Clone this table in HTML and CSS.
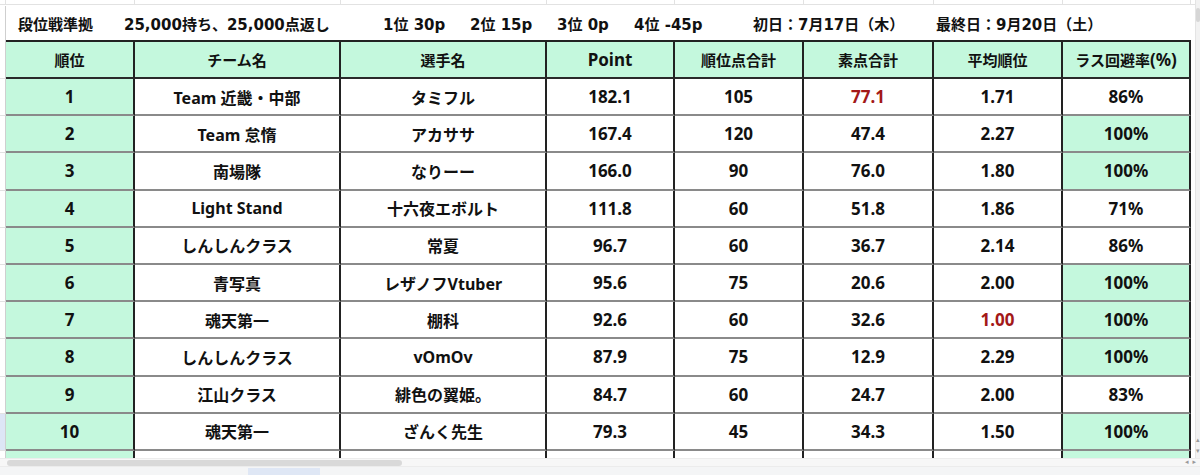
FILE: index.html
```html
<!DOCTYPE html>
<html lang="ja">
<head>
<meta charset="utf-8">
<title>段位戦準拠</title>
<link rel="stylesheet" href="styles.css">
</head>
<body>
<div class="sheet">
  <div class="main">
    <div class="grid-area">
      <div class="strip">
        <div class="sc"></div><div class="sc"></div><div class="sc"></div><div class="sc"></div><div class="sc"></div><div class="sc"></div><div class="sc"></div><div class="sc"></div><div class="sc"></div><div class="sc end"></div>
      </div>
      <div class="titlerow">
        <div class="rh plain"></div>
        <span class="t t1">段位戦準拠</span>
        <span class="t t2">25,000持ち、25,000点返し</span>
        <span class="t t3">1位 30p</span>
        <span class="t t4">2位 15p</span>
        <span class="t t5">3位 0p</span>
        <span class="t t6">4位 -45p</span>
        <span class="t t7">初日：7月17日（木）</span>
        <span class="t t8">最終日：9月20日（土）</span>
      </div>

      <div class="row head">
        <div class="rh"></div>
        <div class="c mint">順位</div>
        <div class="c mint">チーム名</div>
        <div class="c mint">選手名</div>
        <div class="c mint">Point</div>
        <div class="c mint">順位点合計</div>
        <div class="c mint">素点合計</div>
        <div class="c mint">平均順位</div>
        <div class="c mint">ラス回避率<span class="pct">(%)</span></div>
        <div class="pad"></div>
      </div>

      <div class="row">
        <div class="rh"></div>
        <div class="c mint num">1</div><div class="c">Team 近畿・中部</div><div class="c">タミフル</div>
        <div class="c num">182.1</div><div class="c num">105</div><div class="c num red">77.1</div><div class="c num">1.71</div><div class="c num">86%</div>
        <div class="pad"></div>
      </div>
      <div class="row">
        <div class="rh"></div>
        <div class="c mint num">2</div><div class="c">Team 怠惰</div><div class="c">アカササ</div>
        <div class="c num">167.4</div><div class="c num">120</div><div class="c num">47.4</div><div class="c num">2.27</div><div class="c num mint">100%</div>
        <div class="pad"></div>
      </div>
      <div class="row">
        <div class="rh"></div>
        <div class="c mint num">3</div><div class="c">南場隊</div><div class="c">なりーー</div>
        <div class="c num">166.0</div><div class="c num">90</div><div class="c num">76.0</div><div class="c num">1.80</div><div class="c num mint">100%</div>
        <div class="pad"></div>
      </div>
      <div class="row">
        <div class="rh"></div>
        <div class="c mint num">4</div><div class="c">Light Stand</div><div class="c">十六夜エボルト</div>
        <div class="c num">111.8</div><div class="c num">60</div><div class="c num">51.8</div><div class="c num">1.86</div><div class="c num">71%</div>
        <div class="pad"></div>
      </div>
      <div class="row">
        <div class="rh"></div>
        <div class="c mint num">5</div><div class="c">しんしんクラス</div><div class="c">常夏</div>
        <div class="c num">96.7</div><div class="c num">60</div><div class="c num">36.7</div><div class="c num">2.14</div><div class="c num">86%</div>
        <div class="pad"></div>
      </div>
      <div class="row">
        <div class="rh"></div>
        <div class="c mint num">6</div><div class="c">青写真</div><div class="c">レザノフVtuber</div>
        <div class="c num">95.6</div><div class="c num">75</div><div class="c num">20.6</div><div class="c num">2.00</div><div class="c num mint">100%</div>
        <div class="pad"></div>
      </div>
      <div class="row">
        <div class="rh"></div>
        <div class="c mint num">7</div><div class="c">魂天第一</div><div class="c">棚科</div>
        <div class="c num">92.6</div><div class="c num">60</div><div class="c num">32.6</div><div class="c num red">1.00</div><div class="c num mint">100%</div>
        <div class="pad"></div>
      </div>
      <div class="row">
        <div class="rh"></div>
        <div class="c mint num">8</div><div class="c">しんしんクラス</div><div class="c">vOmOv</div>
        <div class="c num">87.9</div><div class="c num">75</div><div class="c num">12.9</div><div class="c num">2.29</div><div class="c num mint">100%</div>
        <div class="pad"></div>
      </div>
      <div class="row">
        <div class="rh"></div>
        <div class="c mint num">9</div><div class="c">江山クラス</div><div class="c">緋色の翼姫。</div>
        <div class="c num">84.7</div><div class="c num">60</div><div class="c num">24.7</div><div class="c num">2.00</div><div class="c num">83%</div>
        <div class="pad"></div>
      </div>
      <div class="row">
        <div class="rh sel"></div>
        <div class="c mint num">10</div><div class="c">魂天第一</div><div class="c">ざんく先生</div>
        <div class="c num">79.3</div><div class="c num">45</div><div class="c num">34.3</div><div class="c num">1.50</div><div class="c num mint">100%</div>
        <div class="pad"></div>
      </div>
      <div class="row partial">
        <div class="rh"></div>
        <div class="c mint"></div><div class="c"></div><div class="c"></div>
        <div class="c"></div><div class="c"></div><div class="c"></div><div class="c"></div><div class="c mint"></div>
        <div class="pad"></div>
      </div>
    </div>
    <div class="vscroll">
      <div class="vthumb"></div>
      <div class="varrows"><span>▴</span><span>▾</span></div>
    </div>
  </div>
  <div class="hscroll">
    <div class="hthumb"></div>
    <div class="harrows"><span>◂</span><span>▸</span></div>
  </div>
  <div class="tabs"><div class="tab"></div></div>
</div>
</body>
</html>
```

FILE: styles.css
```css
* { box-sizing: border-box; }

body {
  margin: 0;
  width: 1200px;
  height: 475px;
  overflow: hidden;
  background: #fff;
  color: #111;
  font-family: "Noto Sans", "Noto Sans CJK JP", sans-serif;
  font-weight: 700;
}

.sheet { display: flex; flex-direction: column; width: 1200px; height: 475px; }

.main { display: flex; height: 458px; }

.grid-area { width: 1195px; height: 458px; overflow: hidden; }

/* previous row remnant */
.strip {
  display: grid;
  grid-template-columns: 6px 129px 206px 206px 128px 129px 130px 129px 128px 4px;
  height: 5px;
}
.sc { border-right: 1px solid #e2e2e2; border-bottom: 1px solid #e2e2e2; }
.sc.end { border-right: none; }

/* title row */
.titlerow {
  display: flex;
  align-items: center;
  height: 35px;
  font-size: 15px;
  font-family: "DejaVu Sans", "Noto Sans CJK JP", sans-serif;
  white-space: nowrap;
  padding-top: 1px;
}
.titlerow .rh { height: 35px; width: 6px; margin-right: 12px; }
.t { display: block; }
.t1 { width: 106px; }
.t2 { width: 259px; }
.t3 { width: 87px; }
.t4 { width: 87px; }
.t5 { width: 77px; }
.t6 { width: 119px; }
.t7 { width: 183px; }
.t8 { width: 200px; }

/* table rows */
.row {
  display: grid;
  grid-template-columns: 6px 129px 206px 206px 128px 129px 130px 129px 128px 4px;
  height: 37.2px;
  font-size: 16px;
}
.rh {
  border-right: 1px solid #cfcfcf;
  border-bottom: 1px solid #e2e2e2;
  background: #fff;
}
.rh.sel { background: #dde6f6; }
.rh.plain { border-bottom: none; }

.c {
  display: flex;
  align-items: center;
  justify-content: center;
  border-right: 2px solid #222;
  border-bottom: 2px solid #8a8a8a;
  white-space: nowrap;
  background: #fff;
}
.pad { background: #fff; }

.head { height: 39px; font-size: 15px; }
.head .c { border-top: 2px solid #222; border-bottom: 2px solid #2a2a2a; }
.head .c:nth-child(5) { font-size: 17px; }
.pct { font-size: 17px; }

.mint { background: #c4f8dd; }
.num { font-size: 17px; }
.red { color: #a31818; }

.partial { height: 8px; }
.partial .c { border-bottom: none; }

/* scrollbars */
.vscroll {
  width: 5px;
  height: 458px;
  background: #f2f2f2;
  border-left: 1px solid #e4e4e4;
  display: flex;
  flex-direction: column;
  justify-content: space-between;
  padding-top: 8px;
  padding-bottom: 2px;
}
.vthumb { height: 14px; background: #d6d6d6; border-radius: 2px; }
.varrows {
  display: flex;
  flex-direction: column;
  gap: 2px;
  font-size: 7px;
  line-height: 9px;
  color: #9a9a9a;
  font-family: "DejaVu Sans", sans-serif;
}

.hscroll {
  height: 8px;
  background: #f7f7f7;
  border-top: 1px solid #ececec;
  display: flex;
  align-items: center;
  justify-content: space-between;
  padding-left: 7px;
  padding-right: 4px;
}
.hthumb { width: 395px; height: 6px; background: #d9d9d9; border-radius: 3px; }
.harrows {
  display: flex;
  gap: 4px;
  font-size: 7px;
  color: #9a9a9a;
  font-family: "DejaVu Sans", sans-serif;
  line-height: 7px;
}

.tabs {
  height: 9px;
  background: #f4f5f6;
  border-top: 1px solid #ececec;
  padding-left: 248px;
  padding-top: 1px;
}
.tab { width: 72px; height: 8px; background: #dfe7f5; }
```
